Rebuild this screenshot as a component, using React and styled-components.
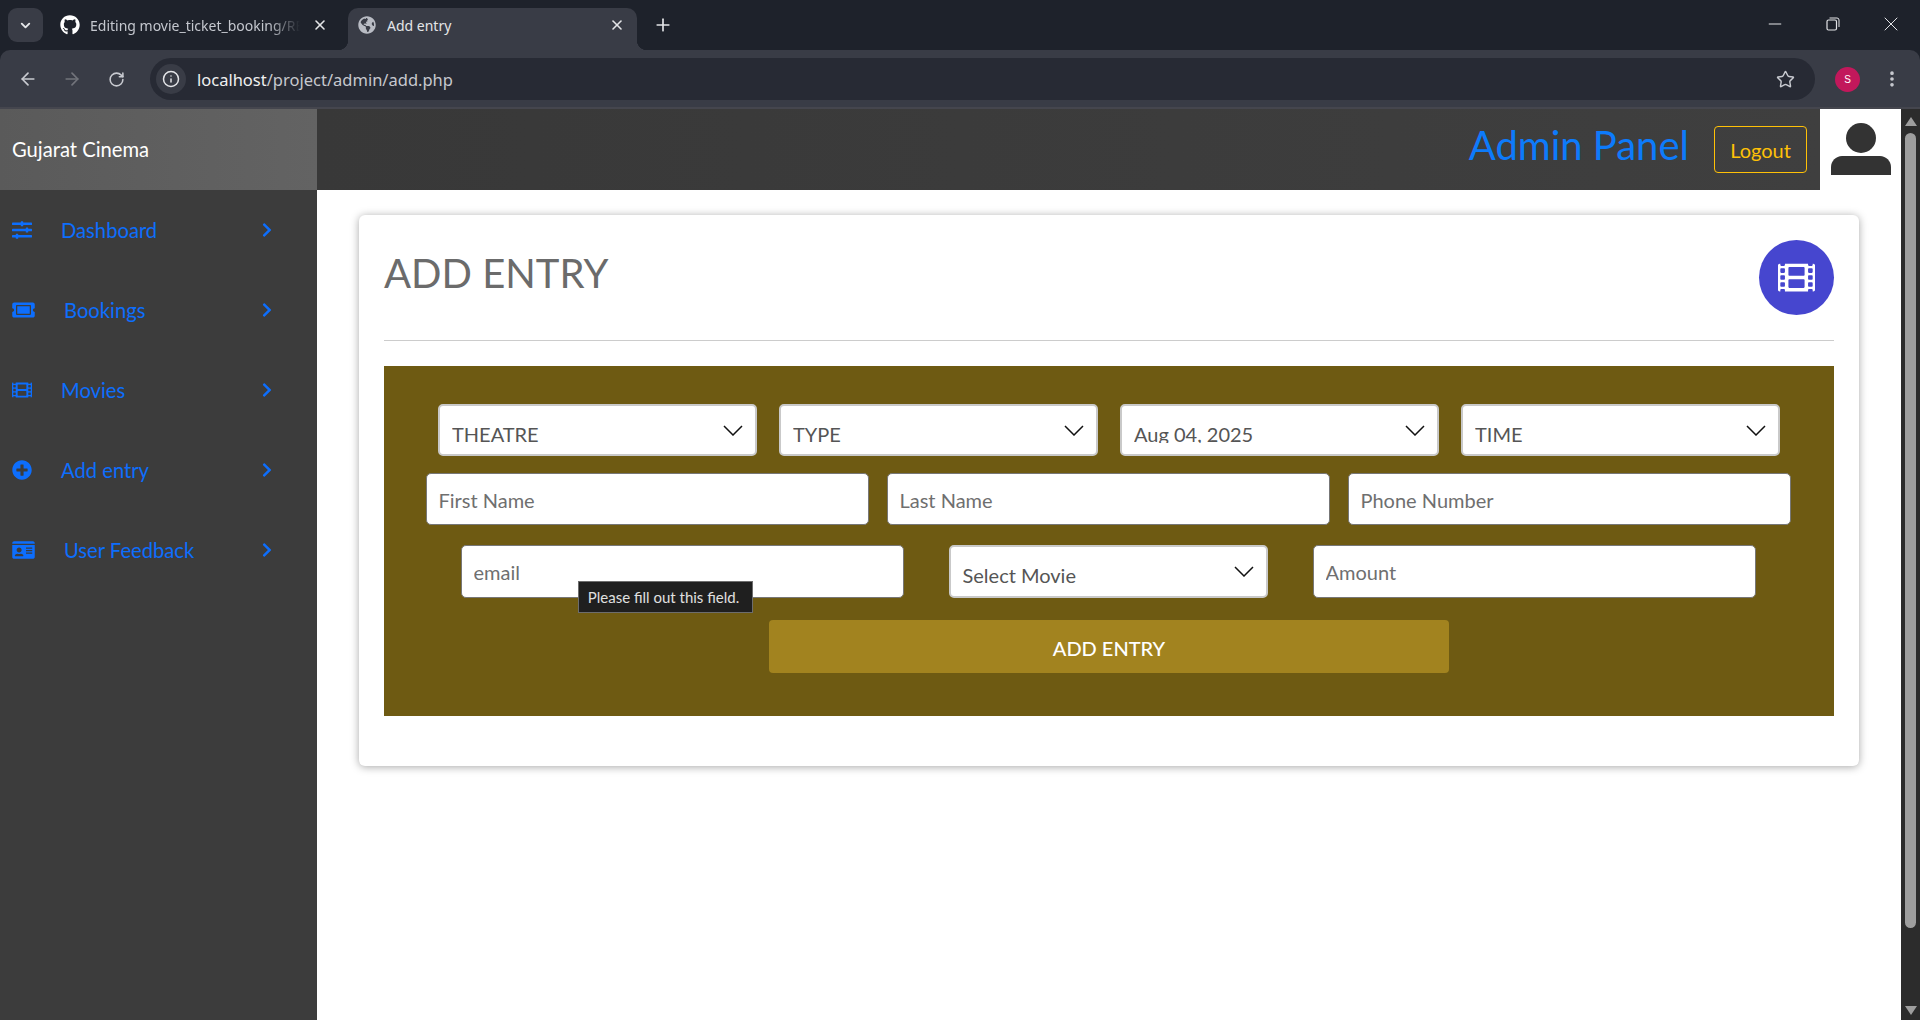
import React from 'react';
import styled, { createGlobalStyle } from 'styled-components';
import {
  FaChevronRight,
  FaFilm,
  FaGithub,
  FaGlobeAmericas,
  FaIdCard,
  FaPlusCircle,
  FaSlidersH,
  FaTicketAlt,
} from 'react-icons/fa';
import {
  ArrowLeft,
  ArrowRight,
  ChevronDown,
  Info,
  Minus,
  MoreVertical,
  Plus,
  RotateCw,
  Star,
  X,
} from 'lucide-react';

const GlobalStyle = createGlobalStyle`
  html, body {
    margin: 0;
    height: 100%;
    overflow: hidden;
    background: #fff;
  }

  * {
    box-sizing: border-box;
  }
`;

const Shell = styled.div`
  display: flex;
  flex-direction: column;
  width: 1920px;
  height: 1020px;
  background: #1e222b;
  font-family: Lato, 'Liberation Sans', sans-serif;
`;

/* browser chrome */
const TabStrip = styled.div`
  display: flex;
  align-items: flex-end;
  height: 50px;
  padding-left: 8px;
  background: #1e222b;
  color: #c4c7ce;
  font-family: 'Noto Sans', sans-serif;
  font-size: 14px;
`;

const TabMenu = styled.div`
  display: flex;
  align-items: center;
  justify-content: center;
  align-self: flex-start;
  width: 35px;
  height: 34px;
  margin-top: 8px;
  border-radius: 9px;
  background: #393c46;
  color: #e6e7ea;
`;

const Tab = styled.div`
  position: relative;
  display: flex;
  align-items: center;
  width: ${(p) => p.$width}px;
  height: 42px;
  padding: 0 ${(p) => (p.$active ? 12 : 20)}px 8px ${(p) => (p.$active ? 10 : 17)}px;
  border-radius: 10px 10px 0 0;
  background: ${(p) => (p.$active ? '#393c46' : 'transparent')};
  color: ${(p) => (p.$active ? '#e4e5e8' : '#c4c7ce')};

  ${(p) =>
    p.$active &&
    `
    &::before, &::after {
      content: '';
      position: absolute;
      bottom: 0;
      width: 10px;
      height: 10px;
    }
    &::before {
      left: -10px;
      background: radial-gradient(circle at 0 0, transparent 10px, #393c46 10.5px);
    }
    &::after {
      right: -10px;
      background: radial-gradient(circle at 100% 0, transparent 10px, #393c46 10.5px);
    }
  `}
`;

const TabIcon = styled.span`
  display: flex;
  flex: none;
  width: ${(p) => (p.$wide ? 30 : 29)}px;
  color: ${(p) => p.$color};
`;

const TabTitle = styled.span`
  flex: 1;
  overflow: hidden;
  white-space: nowrap;
  mask-image: ${(p) =>
    p.$fade ? 'linear-gradient(to right, #000 85%, transparent 100%)' : 'none'};
`;

const TabClose = styled.span`
  display: flex;
  flex: none;
  margin-left: 12px;
  color: #e4e5e8;
`;

const NewTab = styled.div`
  display: flex;
  align-self: flex-start;
  margin: 15px 0 0 16px;
  color: #e4e5e8;
`;

const WindowControls = styled.div`
  display: flex;
  align-self: flex-start;
  margin-left: auto;
  color: #e4e5e8;
`;

const WindowButton = styled.div`
  display: flex;
  align-items: center;
  justify-content: center;
  width: 58px;
  height: 48px;
`;

const Toolbar = styled.div`
  display: flex;
  align-items: center;
  flex: none;
  height: 59px;
  padding: 1px 18px 0 6px;
  border-bottom: 2px solid #45464e;
  border-radius: 10px 10px 0 0;
  background: #393c46;
  color: #c4c7ce;
`;

const NavButton = styled.div`
  display: flex;
  justify-content: center;
  width: 44px;
  color: ${(p) => (p.$disabled ? '#72747b' : '#c8cad0')};
`;

const Omnibox = styled.div`
  display: flex;
  align-items: center;
  flex: 1;
  height: 42px;
  margin-left: 12px;
  padding: 0 20px 0 6px;
  border-radius: 21px;
  background: #272a34;
`;

const SiteInfo = styled.div`
  display: flex;
  align-items: center;
  justify-content: center;
  width: 30px;
  height: 30px;
  margin-right: 11px;
  border-radius: 50%;
  background: #393c46;
  color: #e4e5e8;
`;

const Url = styled.div`
  flex: 1;
  color: #c6c8ce;
  font-family: 'Noto Sans', sans-serif;
  font-size: 16.5px;

  b {
    color: #f0f0f0;
    font-weight: 400;
  }
`;

const ProfileArea = styled.div`
  display: flex;
  align-items: center;
  gap: 22px;
  margin-left: 20px;
`;

const Profile = styled.div`
  display: flex;
  align-items: center;
  justify-content: center;
  width: 25px;
  height: 25px;
  border-radius: 50%;
  background: #c2185b;
  color: #fff;
  font-family: 'Liberation Sans', sans-serif;
  font-size: 10px;
`;

/* page */
const Viewport = styled.div`
  display: flex;
  flex: 1;
  min-height: 0;
  background: #fff;
`;

const Sidebar = styled.aside`
  flex: none;
  width: 317px;
  background: #3c3c3c;
`;

const Brand = styled.div`
  display: flex;
  align-items: center;
  height: 81px;
  padding: 0 0 2px 12px;
  background: linear-gradient(to right, #5a5a5a, #636363);
  color: #fff;
  font-size: 20.2px;
`;

const NavItem = styled.a`
  display: flex;
  align-items: center;
  gap: 29px;
  height: 80px;
  padding: 0 45px 0 12px;
  color: #0d6efd;
  font-size: 20.2px;

  span:nth-child(2) {
    flex: 1;
  }
`;

const NavIcon = styled.span`
  display: flex;
  flex: none;
  width: ${(p) => p.$width}px;

  svg {
    width: 100%;
    height: 20px;
  }
`;

const NavArrow = styled(FaChevronRight)`
  flex: none;
  width: 10px;
  height: 16px;
`;

const Main = styled.main`
  display: flex;
  flex: 1;
  flex-direction: column;
  min-width: 0;
`;

const TopRow = styled.header`
  display: flex;
  flex: none;
  height: 81px;
`;

const TopBar = styled.div`
  display: flex;
  align-items: center;
  justify-content: flex-end;
  flex: 1;
  padding-right: 13px;
  background: linear-gradient(to right, #383838, #3f3f3f);
`;

const PanelTitle = styled.div`
  margin: 0 25px 9px 0;
  color: #0d7bfb;
  font-size: 40px;
`;

const Logout = styled.button`
  width: 93px;
  height: 47px;
  border: 1px solid #ffc107;
  border-radius: 4px;
  background: transparent;
  color: #ffc107;
  font-family: inherit;
  font-size: 20px;
`;

const Avatar = styled.div`
  display: flex;
  align-items: center;
  justify-content: center;
  flex: none;
  width: 81px;
  padding-bottom: 2px;
  background: #fff;
`;

const Card = styled.section`
  flex: none;
  height: 551px;
  margin: 25px 42px 0 42px;
  padding: 25px;
  border-radius: 6px;
  background: #fff;
  box-shadow: 0 1px 8px rgba(0, 0, 0, 0.35);
`;

const CardHead = styled.div`
  display: flex;
  justify-content: space-between;
  padding-bottom: 25px;
  border-bottom: 1px solid #ccc;
`;

const CardTitle = styled.h1`
  margin: 9px 0 0;
  color: #6b6b6b;
  font-size: 40px;
  font-weight: 400;
  line-height: 48px;
`;

const CardIcon = styled.div`
  display: flex;
  align-items: center;
  justify-content: center;
  width: 75px;
  height: 75px;
  border-radius: 50%;
  background: #4646cf;
  color: #fff;
`;

const EntryForm = styled.form`
  display: flex;
  flex-direction: column;
  height: 350px;
  margin-top: 25px;
  padding-top: 38px;
  background: #6e5a12;
`;

const Row = styled.div`
  display: flex;
  justify-content: center;
  gap: ${(p) => p.$gap}px;
  margin-bottom: ${(p) => p.$after}px;
  padding-right: ${(p) => p.$inset || 0}px;
`;

const SelectWrap = styled.div`
  position: relative;
  flex: none;
  width: 319px;
  height: ${(p) => p.$height}px;

  svg {
    position: absolute;
    top: ${(p) => p.$chevronTop}px;
    right: 14px;
    pointer-events: none;
  }
`;

const Select = styled.select`
  display: block;
  width: 100%;
  height: 100%;
  padding: ${(p) => p.$top}px 40px 11px 12px;
  border: 2px solid #c9c9c9;
  border-radius: 5px;
  outline: none;
  appearance: none;
  background: #fff;
  color: #555;
  font-family: inherit;
  font-size: 20px;
`;

const FieldWrap = styled.div`
  position: relative;
  flex: none;
  width: 443px;
`;

const Input = styled.input`
  display: block;
  width: 100%;
  height: ${(p) => p.$height}px;
  padding: 1px 12px 0;
  border: 1px solid #777;
  border-radius: 5px;
  outline: none;
  background: #fff;
  color: #555;
  font-family: inherit;
  font-size: 20px;

  &::placeholder {
    color: #6f6f6f;
    opacity: 1;
  }
`;

const Tooltip = styled.div`
  position: absolute;
  top: 36px;
  left: 117px;
  width: 175px;
  height: 32px;
  padding-right: 3px;
  border: 1px solid #6d6d6d;
  background: #1f1f1f;
  color: #e0e0e0;
  font-size: 15px;
  line-height: 30px;
  text-align: center;
  white-space: nowrap;
`;

const Submit = styled.button`
  align-self: center;
  width: 680px;
  height: 53px;
  padding-top: 3px;
  border: none;
  border-radius: 4px;
  background: #a2831f;
  color: #fff;
  font-family: inherit;
  font-size: 20px;
  font-weight: 500;
`;

const Scrollbar = styled.div`
  display: flex;
  flex: none;
  flex-direction: column;
  align-items: center;
  width: 19px;
  padding: 8px 0 5px;
  background: #2c2c2c;
`;

const ScrollArrow = styled.div`
  flex: none;
  width: 0;
  height: 0;
  border-left: 6px solid transparent;
  border-right: 6px solid transparent;
  ${(p) => (p.$down ? 'border-top' : 'border-bottom')}: 9px solid #9e9e9e;
`;

const ScrollThumb = styled.div`
  flex: 1;
  width: 11px;
  margin: 7px 0 78px;
  border-radius: 6px;
  background: #9e9e9e;
`;

const RestoreIcon = () => (
  <svg width="14" height="14" viewBox="0 0 14 14" fill="none" stroke="currentColor">
    <rect x="1" y="3" width="9.5" height="10" rx="1.5" strokeWidth="1.2" />
    <path d="M3.5 1h7.5a2 2 0 0 1 2 2v7" strokeWidth="1" />
  </svg>
);

const Chevron = () => (
  <svg width="20" height="11" viewBox="0 0 20 11" fill="none" stroke="#111" strokeWidth="1.5">
    <path d="M1 1l9 9 9-9" />
  </svg>
);

const UserIcon = () => (
  <svg width="62" height="52" viewBox="0 0 62 52" fill="#333">
    <circle cx="31" cy="15" r="15" />
    <path d="M1 52V44C1 38 6 33 12 33H50C56 33 61 38 61 44V52Z" />
  </svg>
);

const menu = [
  { label: 'Dashboard', Icon: FaSlidersH, width: 20 },
  { label: 'Bookings', Icon: FaTicketAlt, width: 23 },
  { label: 'Movies', Icon: FaFilm, width: 20 },
  { label: 'Add entry', Icon: FaPlusCircle, width: 20 },
  { label: 'User Feedback', Icon: FaIdCard, width: 23 },
];

const App = () => (
  <Shell>
    <GlobalStyle />
    <TabStrip>
      <TabMenu>
        <ChevronDown size={15} strokeWidth={3} />
      </TabMenu>
      <Tab $width={305}>
        <TabIcon $color="#fff" $wide>
          <FaGithub size={20} />
        </TabIcon>
        <TabTitle $fade>Editing movie_ticket_booking/README.md</TabTitle>
        <TabClose>
          <X size={16} strokeWidth={2.4} />
        </TabClose>
      </Tab>
      <Tab $width={289} $active>
        <TabIcon $color="#b9bcc4">
          <FaGlobeAmericas size={18} />
        </TabIcon>
        <TabTitle>Add entry</TabTitle>
        <TabClose>
          <X size={16} strokeWidth={2.4} />
        </TabClose>
      </Tab>
      <NewTab>
        <Plus size={20} strokeWidth={2} />
      </NewTab>
      <WindowControls>
        <WindowButton>
          <Minus size={20} strokeWidth={1.2} />
        </WindowButton>
        <WindowButton>
          <RestoreIcon />
        </WindowButton>
        <WindowButton>
          <X size={24} strokeWidth={1} />
        </WindowButton>
      </WindowControls>
    </TabStrip>
    <Toolbar>
      <NavButton>
        <ArrowLeft size={20} strokeWidth={2} />
      </NavButton>
      <NavButton $disabled>
        <ArrowRight size={20} strokeWidth={2} />
      </NavButton>
      <NavButton>
        <RotateCw size={17} strokeWidth={2.2} />
      </NavButton>
      <Omnibox>
        <SiteInfo>
          <Info size={18} strokeWidth={2} />
        </SiteInfo>
        <Url>
          <b>localhost</b>/project/admin/add.php
        </Url>
        <Star size={19} strokeWidth={1.8} color="#c8cad0" />
      </Omnibox>
      <ProfileArea>
        <Profile>S</Profile>
        <MoreVertical size={20} strokeWidth={2.4} color="#c8cad0" />
      </ProfileArea>
    </Toolbar>

    <Viewport>
      <Sidebar>
        <Brand>Gujarat Cinema</Brand>
        <nav>
          {menu.map(({ label, Icon, width }) => (
            <NavItem key={label}>
              <NavIcon $width={width}>
                <Icon />
              </NavIcon>
              <span>{label}</span>
              <NavArrow />
            </NavItem>
          ))}
        </nav>
      </Sidebar>

      <Main>
        <TopRow>
          <TopBar>
            <PanelTitle>Admin Panel</PanelTitle>
            <Logout>Logout</Logout>
          </TopBar>
          <Avatar>
            <UserIcon />
          </Avatar>
        </TopRow>

        <Card>
          <CardHead>
            <CardTitle>ADD ENTRY</CardTitle>
            <CardIcon>
              <FaFilm size={37} />
            </CardIcon>
          </CardHead>

          <EntryForm onSubmit={(e) => e.preventDefault()}>
            <Row $gap={22} $after={17}>
              {['THEATRE', 'TYPE', 'Aug 04, 2025', 'TIME'].map((value) => (
                <SelectWrap key={value} $height={52} $chevronTop={21}>
                  <Select $top={16} defaultValue={value}>
                    <option>{value}</option>
                  </Select>
                  <Chevron />
                </SelectWrap>
              ))}
            </Row>
            <Row $gap={18} $after={20} $inset={2}>
              {['First Name', 'Last Name', 'Phone Number'].map((name) => (
                <FieldWrap key={name}>
                  <Input $height={52} placeholder={name} />
                </FieldWrap>
              ))}
            </Row>
            <Row $gap={45} $after={22} $inset={2}>
              <FieldWrap>
                <Input $height={53} placeholder="email" />
                <Tooltip>Please fill out this field.</Tooltip>
              </FieldWrap>
              <SelectWrap $height={53} $chevronTop={21}>
                <Select $top={16} defaultValue="Select Movie">
                  <option>Select Movie</option>
                </Select>
                <Chevron />
              </SelectWrap>
              <FieldWrap>
                <Input $height={53} placeholder="Amount" />
              </FieldWrap>
            </Row>
            <Submit type="submit">ADD ENTRY</Submit>
          </EntryForm>
        </Card>
      </Main>

      <Scrollbar>
        <ScrollArrow />
        <ScrollThumb />
        <ScrollArrow $down />
      </Scrollbar>
    </Viewport>
  </Shell>
);

export default App;
